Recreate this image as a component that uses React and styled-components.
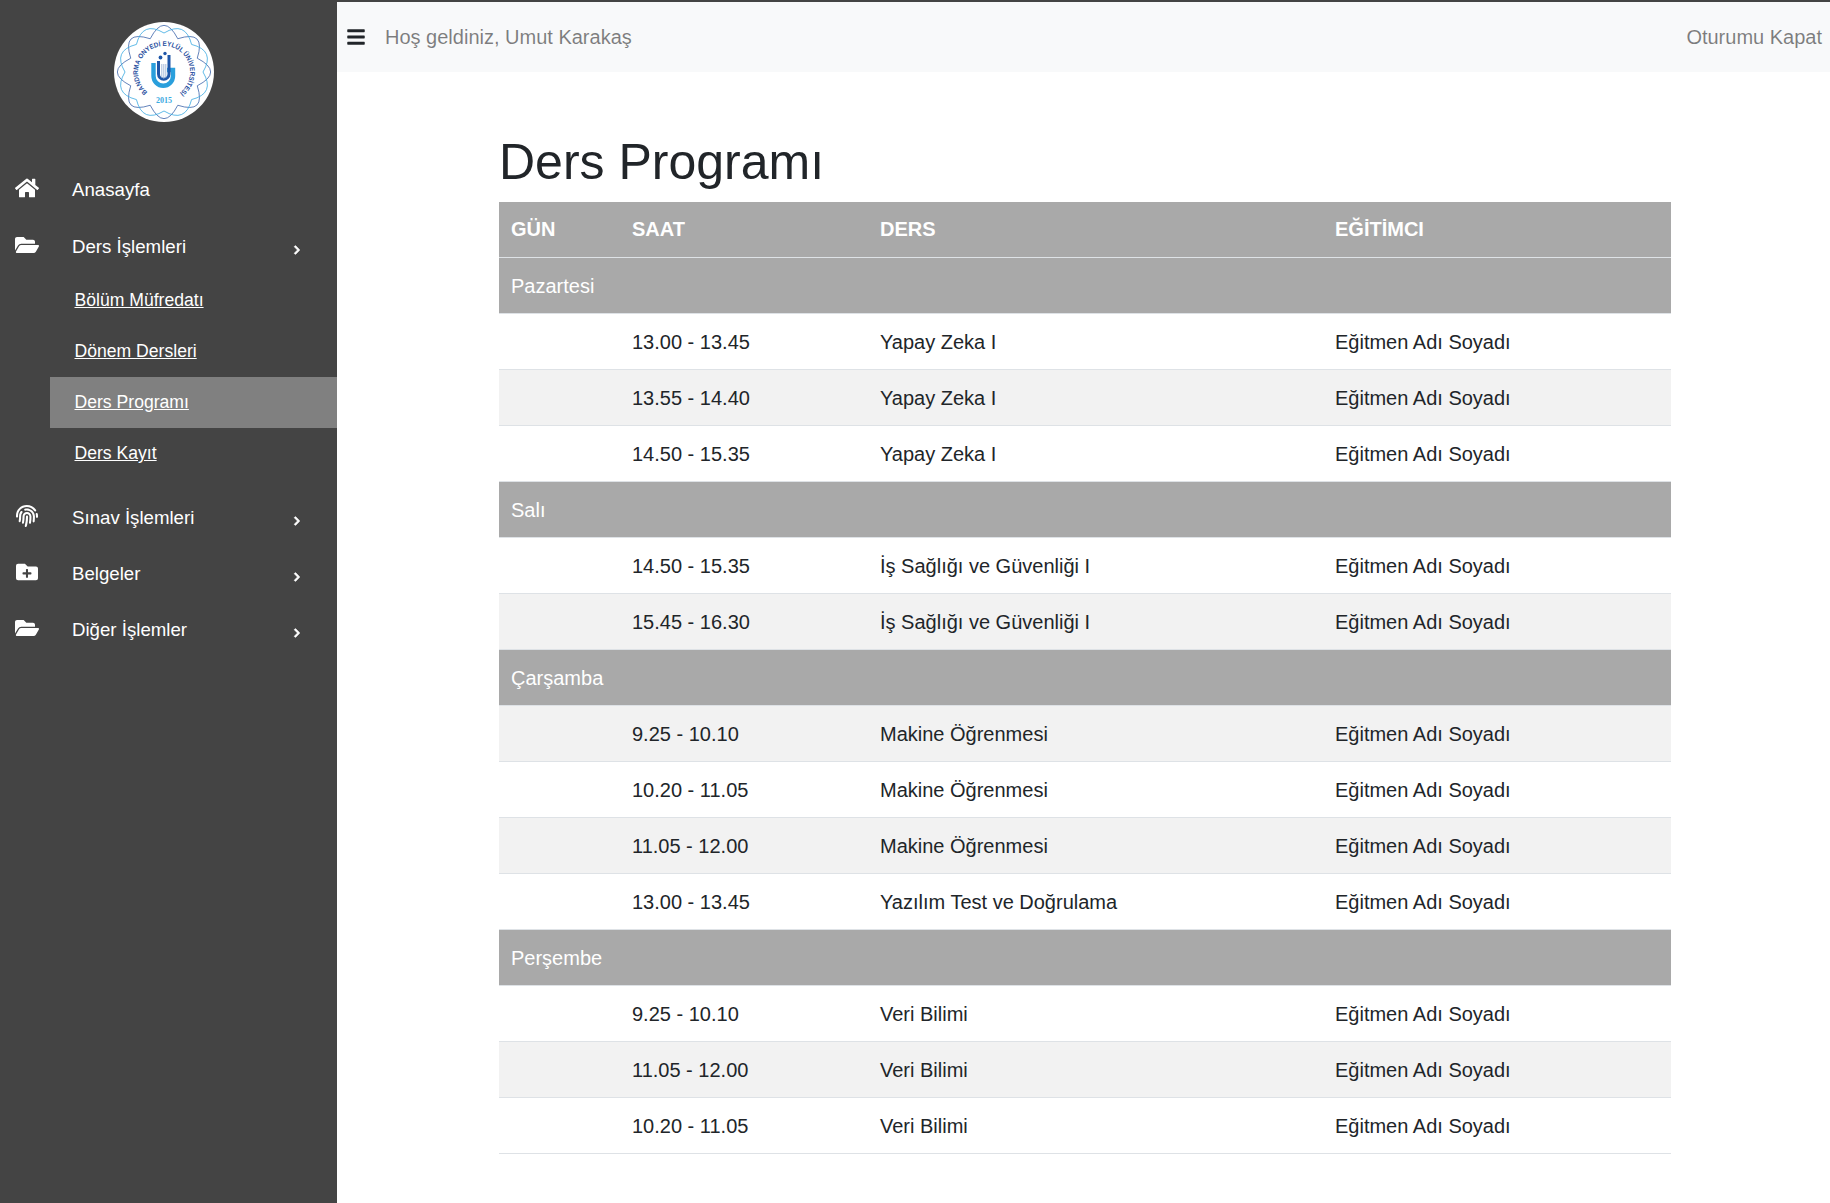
import styled, { createGlobalStyle } from 'styled-components';
import { FaHome, FaFolderOpen, FaFingerprint, FaFolderPlus, FaChevronRight, FaBars } from 'react-icons/fa';

const GlobalStyle = createGlobalStyle`
  html, body {
    margin: 0;
    padding: 0;
    background: #fff;
  }
  body {
    font-family: "Liberation Sans", Arial, sans-serif;
    font-size: 20px;
    color: #212529;
  }
`;

const Page = styled.div`
  display: flex;
  height: 100vh;
  overflow: hidden;
`;

const Sidebar = styled.aside`
  width: 337px;
  flex: none;
  background: #444444;
  color: #fff;
`;

const LogoBox = styled.div`
  height: 162px;
  padding: 20px 9px 0 0;
  box-sizing: border-box;
  display: flex;
  justify-content: center;
  align-items: flex-start;
`;

const MenuItem = styled.div`
  box-sizing: border-box;
  height: ${(p) => p.$h || 56}px;
  padding: 0 0 ${(p) => (p.$h ? 2 : 0)}px 15px;
  display: flex;
  align-items: center;
  font-size: 18.67px;
  color: #fff;
`;

const MenuIcon = styled.span`
  width: 24px;
  margin-right: 33px;
  display: flex;
  justify-content: center;
  font-size: ${(p) => p.$size || 24}px;
  margin-top: -4px;
`;

const Arrow = styled.span`
  margin-left: auto;
  margin-right: 35px;
  font-size: 10px;
  display: flex;
  margin-top: 5px;

  svg {
    stroke: #fff;
    stroke-width: 40;
  }
`;

const SubMenu = styled.div`
  padding-left: 50px;
  margin-bottom: 11px;
`;

const SubItem = styled.a`
  height: 51px;
  display: flex;
  align-items: center;
  padding-left: 24.5px;
  font-size: 17.6px;
  color: #fff;
  text-decoration: underline;
  background: ${(p) => (p.$active ? '#808080' : 'transparent')};
`;

const Main = styled.main`
  flex: 1;
  min-width: 0;
  border-top: 2px solid #444444;
`;

const TopBar = styled.nav`
  height: 70px;
  background: #f8f9fa;
  display: flex;
  align-items: center;
  padding: 0 8px 0 9px;
  color: rgba(0, 0, 0, 0.5);
`;

const MenuButton = styled.span`
  display: flex;
  color: #212529;
  font-size: 20px;
  margin-right: 19px;
`;

const LogoutLink = styled.a`
  margin-left: auto;
`;

const Content = styled.div`
  padding: 60px 159px 0 162px;
`;

const Title = styled.h1`
  margin: 0 0 10px;
  font-size: 50px;
  font-weight: 400;
  line-height: 1.2;
`;

const Table = styled.table`
  width: 100%;
  table-layout: fixed;
  border-collapse: collapse;
`;

const Head = styled.th`
  box-sizing: border-box;
  width: ${(p) => p.$w}px;
  height: 55px;
  padding: 1px 12px 0;
  background: #a9a9a9;
  color: #fff;
  text-align: left;
  font-weight: 700;
  border-bottom: 1px solid #dee2e6;
`;

const Row = styled.tr`
  background: ${(p) => (p.$striped ? '#f2f2f2' : '#fff')};
`;

const Cell = styled.td`
  height: 53px;
  padding: 2px 12px 0;
  border-bottom: 1px solid #dee2e6;
`;

const DayCell = styled(Cell)`
  background: #a9a9a9;
  color: #fff;
`;

const schedule = [
  {
    day: 'Pazartesi',
    rows: [
      ['13.00 - 13.45', 'Yapay Zeka I'],
      ['13.55 - 14.40', 'Yapay Zeka I'],
      ['14.50 - 15.35', 'Yapay Zeka I'],
    ],
  },
  {
    day: 'Salı',
    rows: [
      ['14.50 - 15.35', 'İş Sağlığı ve Güvenliği I'],
      ['15.45 - 16.30', 'İş Sağlığı ve Güvenliği I'],
    ],
  },
  {
    day: 'Çarşamba',
    rows: [
      ['9.25 - 10.10', 'Makine Öğrenmesi'],
      ['10.20 - 11.05', 'Makine Öğrenmesi'],
      ['11.05 - 12.00', 'Makine Öğrenmesi'],
      ['13.00 - 13.45', 'Yazılım Test ve Doğrulama'],
    ],
  },
  {
    day: 'Perşembe',
    rows: [
      ['9.25 - 10.10', 'Veri Bilimi'],
      ['11.05 - 12.00', 'Veri Bilimi'],
      ['10.20 - 11.05', 'Veri Bilimi'],
    ],
  },
];

// 8 lobed outline for the seal
const flower = (inner, outer, turn) => {
  let d = '';
  for (let i = 0; i < 8; i++) {
    const a = ((i * 45 + turn) * Math.PI) / 180;
    const m = ((i * 45 + 22.5 + turn) * Math.PI) / 180;
    const b = (((i + 1) * 45 + turn) * Math.PI) / 180;
    if (i === 0) d += `M${52 + inner * Math.cos(a)} ${52 + inner * Math.sin(a)}`;
    d += `Q${52 + outer * Math.cos(m)} ${52 + outer * Math.sin(m)} ${52 + inner * Math.cos(b)} ${52 + inner * Math.sin(b)}`;
  }
  return d + 'Z';
};

const Logo = () => (
  <svg width="104" height="104" viewBox="0 0 104 104">
    <circle cx="52" cy="52" r="50" fill="#fff" />
    <path d={flower(36, 60, 22.5)} fill="none" stroke="#1f4e9e" strokeWidth="0.7" />
    <path d={flower(39, 56, 0)} fill="none" stroke="#3aaae1" strokeWidth="0.8" />
    <defs>
      <path id="sealArc" d="M35.4 72 A26 26 0 1 1 66.8 73.4" />
    </defs>
    <text fontFamily="Liberation Sans, sans-serif" fontWeight="700" fontSize="6.8" fill="#1f4e9e">
      <textPath href="#sealArc" textLength="128" lengthAdjust="spacingAndGlyphs">
        BANDIRMA ONYEDİ EYLÜL ÜNİVERSİTESİ
      </textPath>
    </text>
    <path d="M41.5 43 V56 A9.75 9.75 0 0 0 61 56 V50 H55" fill="none" stroke="#2a9fdc" strokeWidth="4.4" />
    <path d="M46.5 41 V54 A5.25 5.25 0 0 0 57 54 V35" fill="none" stroke="#1f56a8" strokeWidth="3" />
    <path d="M49.8 44 V58 M51.8 44 V59 M53.8 44 V58" stroke="#8fa9cf" strokeWidth="0.8" />
    <circle cx="48.5" cy="37.5" r="1.9" fill="#1f56a8" />
    <circle cx="53" cy="33.5" r="1.7" fill="#1f56a8" />
    <text x="52" y="83" textAnchor="middle" fontFamily="Liberation Serif, serif" fontWeight="700" fontSize="8" fill="#3aaae1">
      2015
    </text>
  </svg>
);

const MainEntry = ({ icon, label, arrow = true, size, height }) => (
  <MenuItem $h={height}>
    <MenuIcon $size={size}>{icon}</MenuIcon>
    {label}
    {arrow && (
      <Arrow>
        <FaChevronRight />
      </Arrow>
    )}
  </MenuItem>
);

export default function App() {
  let counter = 0;

  return (
    <Page>
      <GlobalStyle />
      <Sidebar>
        <LogoBox>
          <Logo />
        </LogoBox>
        <MainEntry icon={<FaHome />} label="Anasayfa" arrow={false} height={57} />
        <MainEntry icon={<FaFolderOpen />} label="Ders İşlemleri" />
        <SubMenu>
          <SubItem>Bölüm Müfredatı</SubItem>
          <SubItem>Dönem Dersleri</SubItem>
          <SubItem $active>Ders Programı</SubItem>
          <SubItem>Ders Kayıt</SubItem>
        </SubMenu>
        <MainEntry icon={<FaFingerprint />} label="Sınav İşlemleri" size={22} />
        <MainEntry icon={<FaFolderPlus />} label="Belgeler" size={22} />
        <MainEntry icon={<FaFolderOpen />} label="Diğer İşlemler" />
      </Sidebar>
      <Main>
        <TopBar>
          <MenuButton>
            <FaBars />
          </MenuButton>
          Hoş geldiniz, Umut Karakaş
          <LogoutLink>Oturumu Kapat</LogoutLink>
        </TopBar>
        <Content>
          <Title>Ders Programı</Title>
          <Table>
            <thead>
              <tr>
                <Head $w={121}>GÜN</Head>
                <Head $w={248}>SAAT</Head>
                <Head $w={455}>DERS</Head>
                <Head $w={348}>EĞİTİMCI</Head>
              </tr>
            </thead>
            <tbody>
              {schedule.flatMap((group) => {
                counter += 1;
                const rows = [
                  <tr key={group.day}>
                    <DayCell>{group.day}</DayCell>
                    <DayCell colSpan={3} />
                  </tr>,
                ];
                group.rows.forEach(([time, course]) => {
                  counter += 1;
                  rows.push(
                    <Row key={group.day + time} $striped={counter % 2 === 1}>
                      <Cell />
                      <Cell>{time}</Cell>
                      <Cell>{course}</Cell>
                      <Cell>Eğitmen Adı Soyadı</Cell>
                    </Row>
                  );
                });
                return rows;
              })}
            </tbody>
          </Table>
        </Content>
      </Main>
    </Page>
  );
}
